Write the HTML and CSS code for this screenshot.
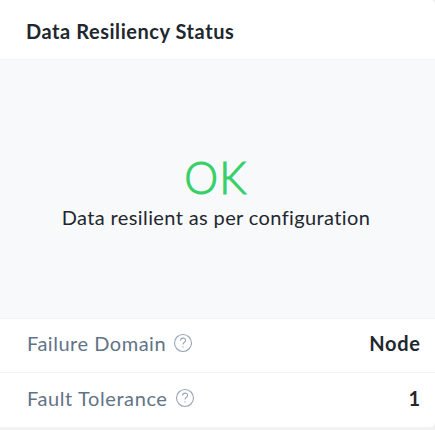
FILE: index.html
```
<!DOCTYPE html>
<html lang="en">
<head>
<meta charset="utf-8">
<title>Data Resiliency Status</title>
<link rel="stylesheet" href="styles.css">
</head>
<body>
<section class="card">
  <header class="card-header"><h2 class="title">Data Resiliency Status</h2></header>
  <div class="summary">
    <div class="status">OK</div>
    <div class="message">Data resilient as per configuration</div>
  </div>
  <div class="row">
    <span class="label domain">Failure Domain</span>
    <svg class="help" viewBox="0 0 20 20"><circle cx="10" cy="10" r="8.5"/><path d="M7.5 7.6C7.7 4.2 12.7 4.4 12.6 7.4C12.5 9.4 10 9.2 10 11.6M10 13.2v1.3"/></svg>
    <span class="value node">Node</span>
  </div>
  <div class="row">
    <span class="label tolerance">Fault Tolerance</span>
    <svg class="help" viewBox="0 0 20 20"><circle cx="10" cy="10" r="8.5"/><path d="M7.5 7.6C7.7 4.2 12.7 4.4 12.6 7.4C12.5 9.4 10 9.2 10 11.6M10 13.2v1.3"/></svg>
    <span class="value">1</span>
  </div>
</section>
</body>
</html>
```
FILE: styles.css
```
* { box-sizing: border-box; }
body { margin: 0; height: 430px; overflow: hidden; background: #f2f2f3; font-family: Lato, "Open Sans", sans-serif; color: #22272e; }
.card { background: #fff; height: 427px; border-radius: 0 5px 5px 0; overflow: hidden; }
.card-header { height: 59px; padding: 19px 26px 0; }
.title { margin: 0; font-size: 20px; line-height: 24px; font-weight: 700; letter-spacing: .55px; white-space: nowrap; }
.summary { height: 260px; padding-top: 93px; background: #f8f9fb; border-top: 1px solid #f2f4f6; border-bottom: 1px solid #f2f4f6; display: flex; flex-direction: column; align-items: center; }
.status { margin-right: 3px; font-size: 46px; line-height: 48px; font-weight: 300; letter-spacing: 1px; color: #36d068; -webkit-text-stroke: 1.1px #36d068; transform: scaleX(.93); }
.message { margin-right: 3px; margin-top: 3px; font-size: 20px; line-height: 26px; letter-spacing: .38px; white-space: nowrap; }
.row { height: 54px; padding: 0 15px 5px 27px; display: flex; align-items: center; border-bottom: 1px solid #f2f4f6; }
.row + .row { padding-bottom: 5px; border-bottom: 0; }
.label { font-size: 20px; color: #627386; white-space: nowrap; }
.domain { width: 139px; letter-spacing: .52px; }
.tolerance { width: 141px; letter-spacing: .6px; }
.help { width: 20px; height: 20px; margin-left: 7px; fill: none; stroke: #9aa5b5; stroke-width: 1.1; }
.value { margin-left: auto; font-size: 20px; font-weight: 700; }
.node { letter-spacing: .7px; margin-right: -.7px; }
```
